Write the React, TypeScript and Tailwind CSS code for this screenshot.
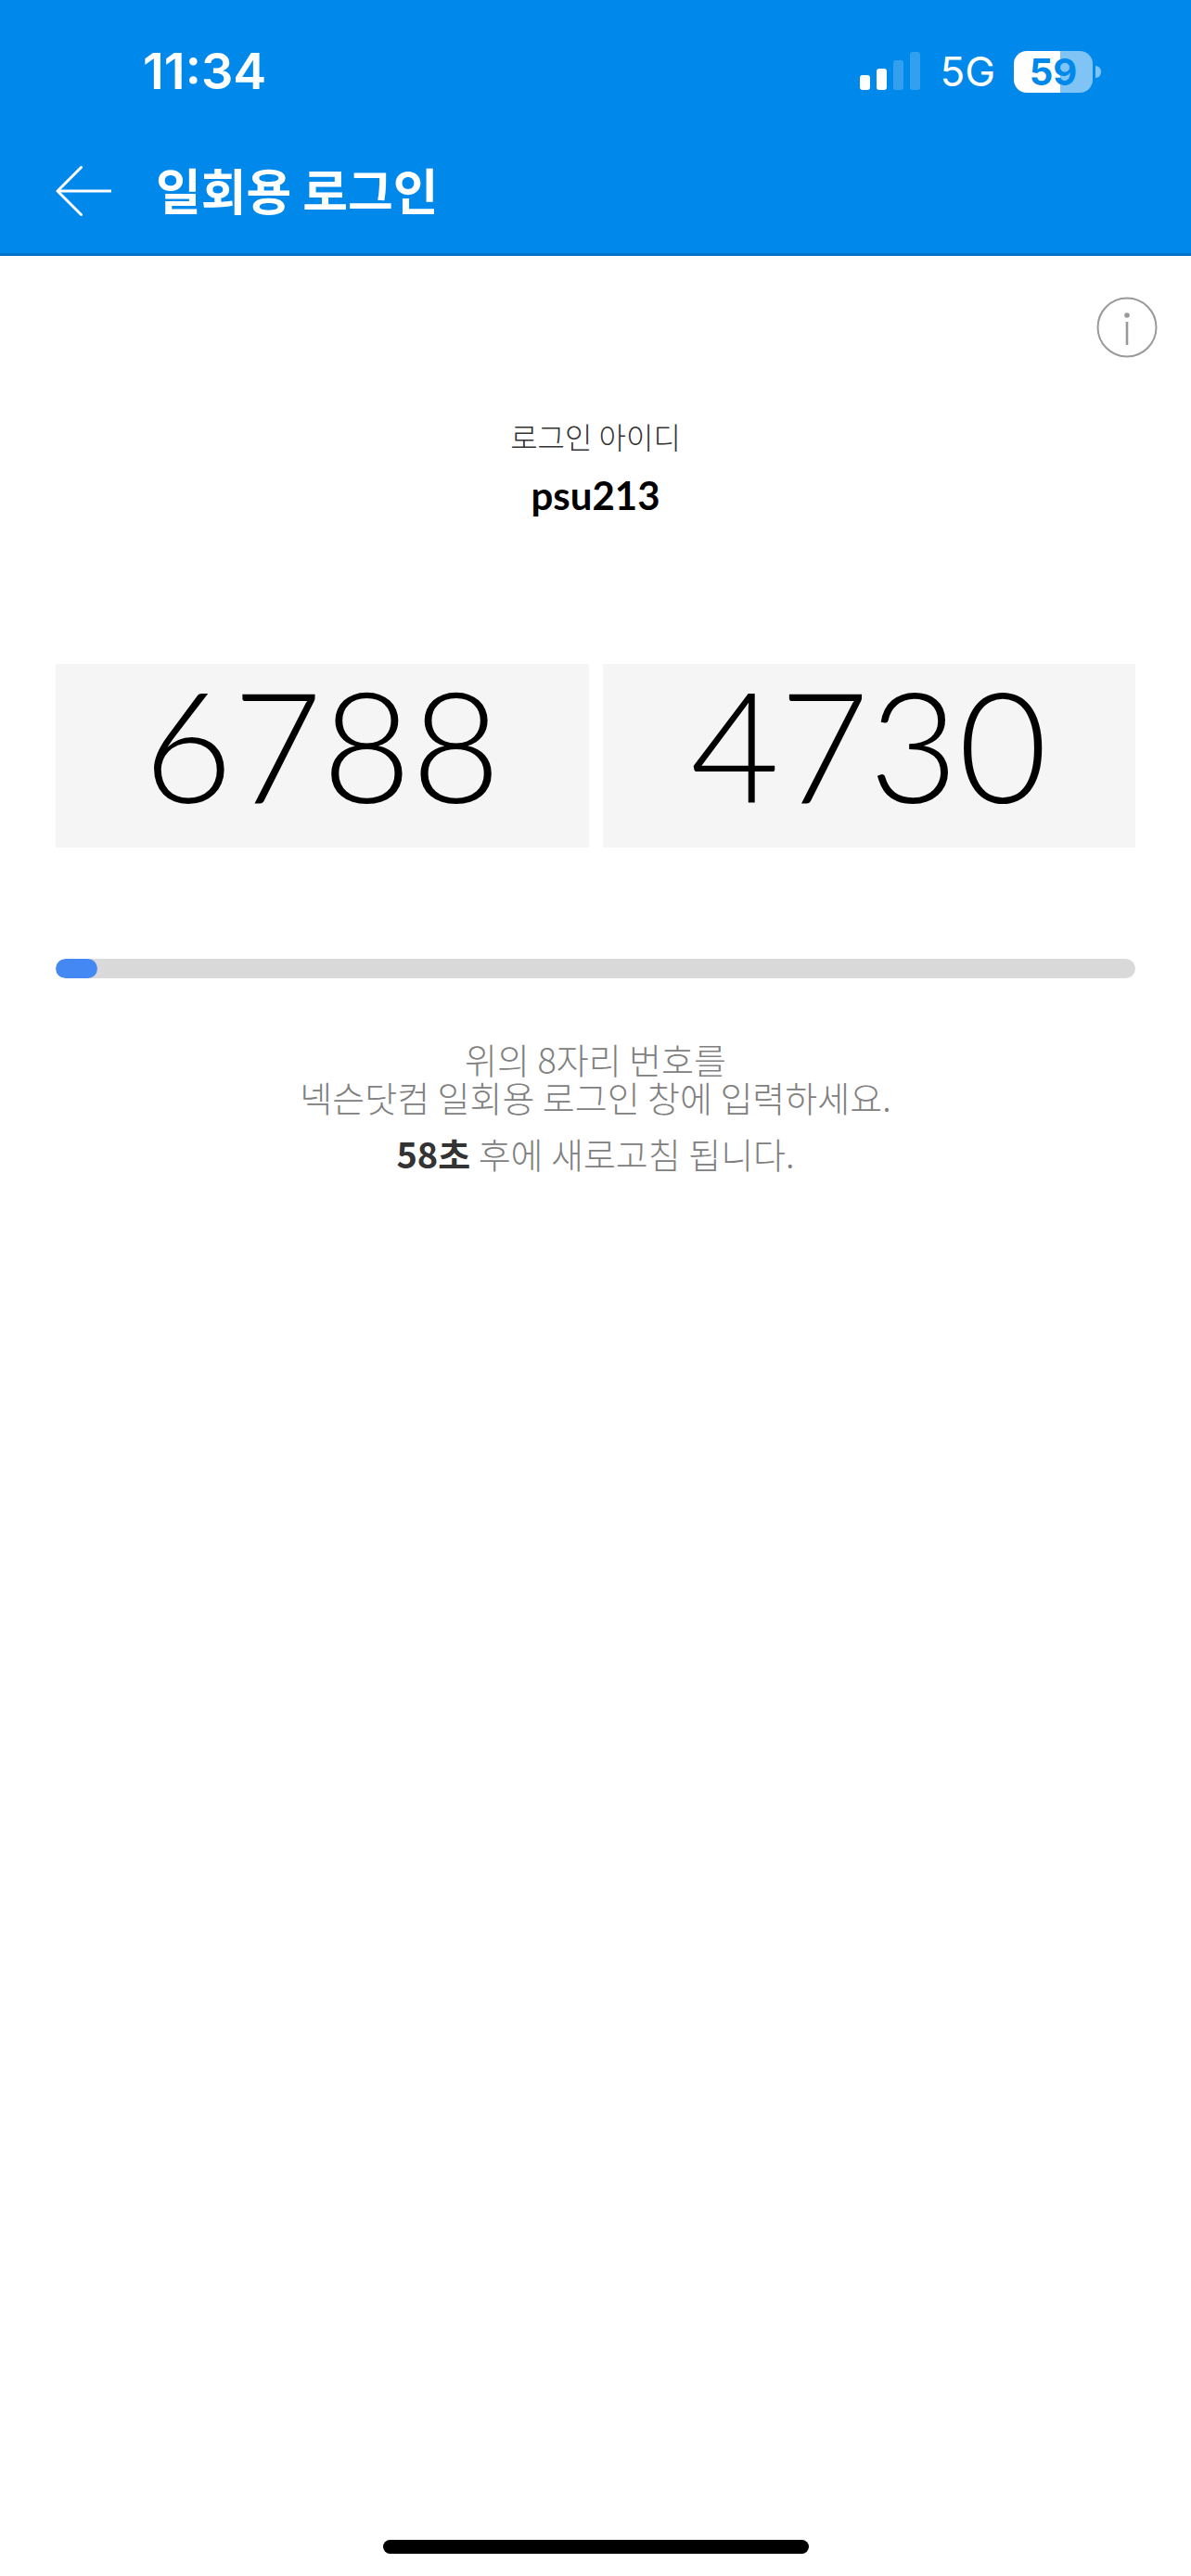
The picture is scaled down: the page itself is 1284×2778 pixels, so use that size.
import React from "react";

const KR = "font-['Noto_Sans_CJK_KR',sans-serif]";
const LATO = "font-['Lato','Noto_Sans_CJK_KR',sans-serif]";
const INTER = "font-['Inter',sans-serif]";

function StatusBar() {
  return (
    <div className={`flex h-[138px] items-center justify-between pt-4 pr-[97px] pl-[154px] text-white ${INTER}`}>
      <time className="text-[54px] leading-[60px] font-semibold">11:34</time>
      <div className="flex items-center">
        <svg width="66" height="42" viewBox="0 0 66 42" aria-label="신호 세기">
          <rect x="0" y="25" width="11" height="16" rx="3" fill="#fff" />
          <rect x="18" y="18" width="11" height="23" rx="3" fill="#fff" />
          <rect x="36" y="9" width="11" height="32" rx="3" fill="#fff" fillOpacity="0.2" />
          <rect x="54" y="0" width="11" height="41" rx="3" fill="#fff" fillOpacity="0.2" />
        </svg>
        <span className="ml-5 text-[44px] leading-[52px]">5G</span>
        <div className="ml-5 flex items-center gap-[3px]">
          <div className="flex h-[45px] w-[85px] items-center justify-center rounded-[14px] bg-linear-to-r from-white from-59% to-[#80c4f5] to-59%">
            <span className="text-[40px] leading-[45px] font-bold text-[#0089eb]">59</span>
          </div>
          <div className="h-[13px] w-[6px] rounded-r-full bg-[#80c4f5]" />
        </div>
      </div>
    </div>
  );
}

function TitleBar() {
  return (
    <div className="flex h-[135px] items-center gap-12 px-[60px]">
      <button type="button" aria-label="뒤로" className="shrink-0">
        <svg width="60" height="54" viewBox="0 0 60 54" fill="none" stroke="#fff" strokeWidth="3">
          <path d="M60 27H2" />
          <path d="M27.5 1.5L2 27L27.5 52.5" strokeLinecap="round" strokeLinejoin="round" />
        </svg>
      </button>
      <h1 className={`pb-1 text-[53px] leading-[64px] font-bold text-white ${KR}`}>일회용 로그인</h1>
    </div>
  );
}

function CodeCard({ digits }: { digits: string }) {
  return (
    <div className={`h-[198px] flex-1 bg-[#f5f5f5] text-center text-[166px] leading-[172px] font-light text-black ${LATO}`}>
      {digits}
    </div>
  );
}

export default function App() {
  const progress = (45 / 1164) * 100;
  return (
    <div className={`flex min-h-screen flex-col bg-white ${KR}`}>
      <header className="border-b-[3px] border-[#0072c8] bg-[#0089eb]">
        <StatusBar />
        <TitleBar />
      </header>

      <main className="flex flex-1 flex-col px-[60px]">
        <div className="-mr-6 flex justify-end pt-[44px]">
          <button type="button" aria-label="안내">
            <svg width="66" height="66" viewBox="0 0 66 66" fill="none">
              <circle cx="33" cy="33" r="31.5" stroke="#999" strokeWidth="2" />
              <circle cx="33" cy="20" r="2.8" fill="#999" />
              <path d="M33 27V52" stroke="#999" strokeWidth="2.6" />
            </svg>
          </button>
        </div>

        <section className="flex flex-col items-center pt-[60px]">
          <p className="text-[32px] leading-[48px] font-light text-[#333]">로그인 아이디</p>
          <p className={`mt-4 text-[42px] leading-[48px] font-bold text-black ${LATO}`}>psu213</p>
        </section>

        <section className="mt-[158px] flex gap-[15px]">
          <CodeCard digits="6788" />
          <CodeCard digits="4730" />
        </section>

        <div
          role="progressbar"
          aria-label="남은 시간"
          aria-valuemin={0}
          aria-valuemax={100}
          aria-valuenow={Math.round(progress)}
          className="mt-[120px] h-[21px] overflow-hidden rounded-full bg-[#d9d9d9]"
        >
          <div className="h-full rounded-full bg-[#4488f4]" style={{ width: `${progress}%` }} />
        </div>

        <section className="mt-[66px] text-center text-[38px] leading-[41px] font-light text-[#808080]">
          <p>
            위의 8자리 번호를
            <br />
            넥슨닷컴 일회용 로그인 창에 입력하세요.
          </p>
          <p className="mt-5">
            <strong className="font-bold text-[#333]">58초</strong> 후에 새로고침 됩니다.
          </p>
        </section>
      </main>

      <div className="mx-auto mb-6 h-[15px] w-[459px] rounded-full bg-black" />
    </div>
  );
}
